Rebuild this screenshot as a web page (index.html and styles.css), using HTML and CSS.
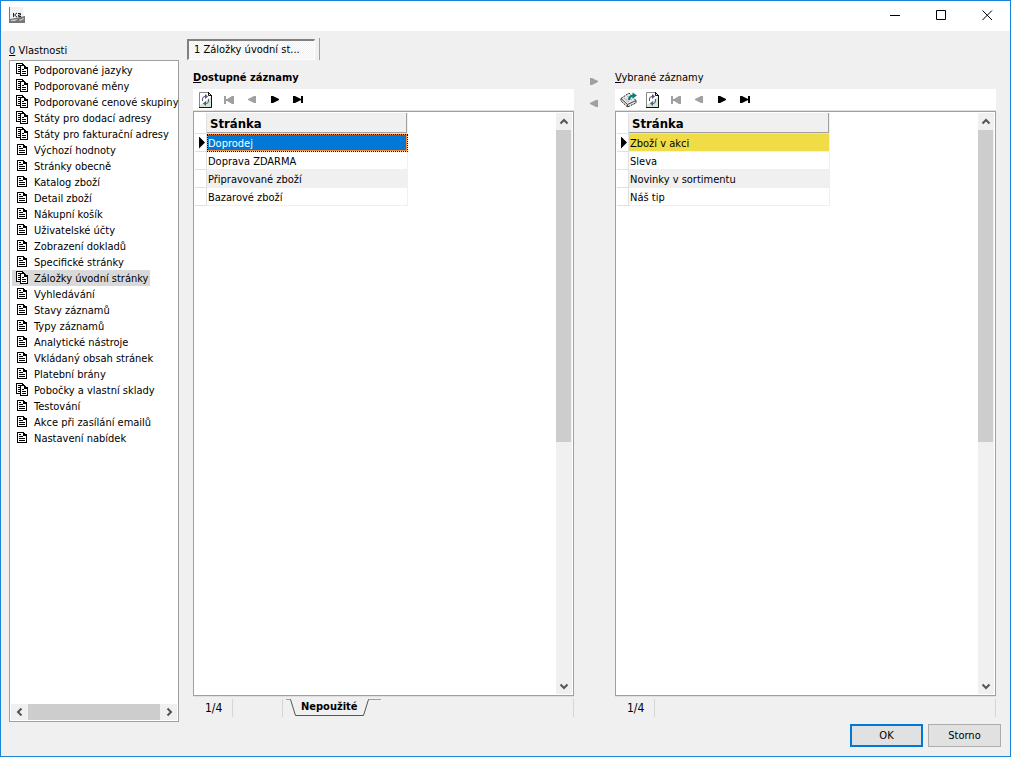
FILE: index.html
```html
<!DOCTYPE html>
<html lang="cs">
<head>
<meta charset="utf-8">
<title>Vlastnosti</title>
<link rel="stylesheet" href="styles.css">
</head>
<body>
<svg class="sprite" aria-hidden="true">
  <symbol id="page" viewBox="0 0 14 14">
    <g shape-rendering="crispEdges">
    <path d="M1.500 1.500H7.500V3.500H10.500V11.500H1.500Z" fill="#fff" stroke="#000"/>
    <path d="M7 2.500H9M7.500 2V4.500H10M3 3.500H5M3 5.500H7M3 7.500H9M3 9.500H9" fill="none" stroke="#000"/>
    </g>
  </symbol>
  <symbol id="pages" viewBox="0 0 14 14">
    <g shape-rendering="crispEdges">
    <path d="M.5 .5H6.500V2.500H8.500V10.500H.5Z" fill="#fff" stroke="#000"/>
    <path d="M2 2.500H4M2 4.500H4M2 6.500H4M2 8.500H4M6 1.500H8" stroke="#000"/>
    <path d="M4.500 2.500H8.500V4.500H11.500V12.500H4.500Z" fill="#fff" stroke="#000"/>
    <path d="M8 3.500H10M8.500 3V5.500H11M10 4.500H11M6 6.500H8M6 8.500H10M6 10.500H10" fill="none" stroke="#000"/>
    </g>
  </symbol>
  <symbol id="refresh" viewBox="0 0 16 16">
    <path d="M1.500 .5H10.500L13.500 3.500V15.500H1.500Z" fill="#fff" stroke="#888"/>
    <path d="M13 5V15H2V13Z" fill="#d4e6d4"/>
    <path d="M13.500 3V15.500H1M10.500 0V3.500H14M11 1L13.500 3.500" fill="none" stroke="#111"/>
    <path d="M4.500 9V7Q4.500 4.500 7 4.500H8M10.500 7V9Q10.500 11.500 8 11.500H7" fill="none" stroke="#55557f"/>
    <path d="M7 2L10 4.500L7 7ZM8 9L5 11.500L8 14Z" fill="#55557f"/>
  </symbol>
  <symbol id="book" viewBox="0 0 18 16">
    <path d="M1 6.500L9 1L16 8.500V11L7.500 15L1 9Z" fill="#e6e6e6"/>
    <path d="M1 6.500L9 1L16 8.500M1 6.500V9L7.500 15L16 11V9" fill="none" stroke="#222" stroke-dasharray="2 1"/>
    <path d="M1 6.500L7.500 12.500L16 8.500M7.500 12.500V15" fill="none" stroke="#444"/>
    <path d="M4 6L9 10M7 4L12 8" fill="none" stroke="#aaa"/>
    <path d="M9 8Q9 3.500 14 3.500" fill="none" stroke="#007c7c" stroke-width="2"/>
    <path d="M12.500 .5L17 3.500L12.500 6.500Z" fill="#007c7c"/>
  </symbol>
  <symbol id="first" viewBox="0 0 12 10"><path d="M1 1H3V9H1ZM11 1V9H9L4 6H3V4H4L9 1Z" fill="currentColor"/></symbol>
  <symbol id="prev" viewBox="0 0 12 10"><path d="M10 1V8H8L2 5V4L8 1Z" fill="currentColor"/></symbol>
  <symbol id="next" viewBox="0 0 12 10"><path d="M2 1V8H4L10 5V4L4 1Z" fill="currentColor"/></symbol>
  <symbol id="last" viewBox="0 0 12 10"><path d="M1 1V8H3L9 5V4L3 1ZM9 1H11V8H9Z" fill="currentColor"/></symbol>
  <symbol id="chev" viewBox="0 0 10 10"><path d="M1.500 6.500L5 3L8.500 6.500" fill="none" stroke="#555" stroke-width="2"/></symbol>
</svg>
<div class="window">
  <header class="titlebar">
    <svg class="logo" viewBox="0 0 16 16" role="img" aria-label="K2">
      <path d="M1 0H14L15 11L1 12Z" fill="#f2f2f2"/>
      <path d="M0 0H1V12L16 9V16H0Z" fill="#777"/>
      <path d="M2 13L9 12L6 14H2ZM10 13L15 11V12L11 14Z" fill="#ccc"/>
      <path d="M4.500 6V10M8 6L5.500 8L8 10M9 6.500H11.500V8H9.500V9.500H12" fill="none" stroke="#222"/>
    </svg>
    <div class="caption-buttons">
      <button aria-label="Minimalizovat"><svg viewBox="0 0 11 11"><path d="M0 5.500H10"/></svg></button>
      <button aria-label="Maximalizovat"><svg viewBox="0 0 11 11"><path d="M.5 .5H9.500V9.500H.5Z"/></svg></button>
      <button aria-label="Zavřít"><svg viewBox="0 0 11 11"><path d="M.5 .5L10 10M10 .5L.5 10"/></svg></button>
    </div>
  </header>
  <div class="content">
    <nav class="side" aria-labelledby="side-label">
      <div class="side-label" id="side-label"><u>0</u> Vlastnosti</div>
      <div class="tree">
        <ul class="items">
          <li><button><svg><use href="#pages"/></svg>Podporované jazyky</button></li>
          <li><button><svg><use href="#pages"/></svg>Podporované měny</button></li>
          <li><button><svg><use href="#pages"/></svg>Podporované cenové skupiny</button></li>
          <li><button><svg><use href="#pages"/></svg>Státy pro dodací adresy</button></li>
          <li><button><svg><use href="#pages"/></svg>Státy pro fakturační adresy</button></li>
          <li><button><svg><use href="#page"/></svg>Výchozí hodnoty</button></li>
          <li><button><svg><use href="#page"/></svg>Stránky obecně</button></li>
          <li><button><svg><use href="#page"/></svg>Katalog zboží</button></li>
          <li><button><svg><use href="#page"/></svg>Detail zboží</button></li>
          <li><button><svg><use href="#page"/></svg>Nákupní košík</button></li>
          <li><button><svg><use href="#page"/></svg>Uživatelské účty</button></li>
          <li><button><svg><use href="#page"/></svg>Zobrazení dokladů</button></li>
          <li><button><svg><use href="#page"/></svg>Specifické stránky</button></li>
          <li><button class="selected"><svg><use href="#pages"/></svg>Záložky úvodní stránky</button></li>
          <li><button><svg><use href="#page"/></svg>Vyhledávání</button></li>
          <li><button><svg><use href="#page"/></svg>Stavy záznamů</button></li>
          <li><button><svg><use href="#page"/></svg>Typy záznamů</button></li>
          <li><button><svg><use href="#page"/></svg>Analytické nástroje</button></li>
          <li><button><svg><use href="#page"/></svg>Vkládaný obsah stránek</button></li>
          <li><button><svg><use href="#page"/></svg>Platební brány</button></li>
          <li><button><svg><use href="#pages"/></svg>Pobočky a vlastní sklady</button></li>
          <li><button><svg><use href="#page"/></svg>Testování</button></li>
          <li><button><svg><use href="#page"/></svg>Akce při zasílání emailů</button></li>
          <li><button><svg><use href="#page"/></svg>Nastavení nabídek</button></li>
        </ul>
        <div class="hscroll">
          <button aria-label="Doleva"><svg class="left"><use href="#chev"/></svg></button>
          <div class="thumb"></div>
          <button aria-label="Doprava"><svg class="right"><use href="#chev"/></svg></button>
        </div>
      </div>
    </nav>
    <main class="main">
      <div class="tabs"><button class="tab">1 Záložky úvodní st...</button></div>
      <div class="panels">
        <section class="panel">
          <h2 class="heading active"><u>D</u>ostupné záznamy</h2>
          <div class="toolbar">
            <button aria-label="Obnovit"><svg class="tool"><use href="#refresh"/></svg></button>
            <button aria-label="První" disabled><svg class="nav"><use href="#first"/></svg></button>
            <button aria-label="Předchozí" disabled><svg class="nav"><use href="#prev"/></svg></button>
            <button aria-label="Další"><svg class="nav"><use href="#next"/></svg></button>
            <button aria-label="Poslední"><svg class="nav"><use href="#last"/></svg></button>
          </div>
          <div class="grid">
            <div class="sheet">
              <table>
                <thead><tr><td class="mark"></td><th>Stránka</th></tr></thead>
                <tbody>
                  <tr class="focused"><td class="mark current"></td><td>Doprodej</td></tr>
                  <tr><td class="mark"></td><td>Doprava ZDARMA</td></tr>
                  <tr class="odd"><td class="mark"></td><td>Připravované zboží</td></tr>
                  <tr><td class="mark"></td><td>Bazarové zboží</td></tr>
                </tbody>
              </table>
            </div>
            <div class="vscroll">
              <button aria-label="Nahoru"><svg><use href="#chev"/></svg></button>
              <div class="track"><div class="thumb"></div></div>
              <button aria-label="Dolů"><svg class="down"><use href="#chev"/></svg></button>
            </div>
          </div>
          <div class="status">
            <span class="count">1/4</span>
            <span class="spacer"></span>
            <button class="sheet-tab">
              <svg viewBox="0 0 95 18"><path d="M0 .5H5M82 .5H95" stroke="#a0a0a0"/><path d="M4.500 .5L9.500 16.500H77.500L82.500 .5" fill="none" stroke="#555"/></svg>
              <span>Nepoužité</span>
            </button>
          </div>
        </section>
        <div class="transfer">
          <button aria-label="Přidat" disabled><svg class="nav"><use href="#next"/></svg></button>
          <button aria-label="Odebrat" disabled><svg class="nav"><use href="#prev"/></svg></button>
        </div>
        <section class="panel">
          <h2 class="heading"><u>V</u>ybrané záznamy</h2>
          <div class="toolbar">
            <button class="wide" aria-label="Kniha"><svg class="book"><use href="#book"/></svg></button>
            <button aria-label="Obnovit"><svg class="tool"><use href="#refresh"/></svg></button>
            <button aria-label="První" disabled><svg class="nav"><use href="#first"/></svg></button>
            <button aria-label="Předchozí" disabled><svg class="nav"><use href="#prev"/></svg></button>
            <button aria-label="Další"><svg class="nav"><use href="#next"/></svg></button>
            <button aria-label="Poslední"><svg class="nav"><use href="#last"/></svg></button>
          </div>
          <div class="grid">
            <div class="sheet">
              <table>
                <thead><tr><td class="mark"></td><th>Stránka</th></tr></thead>
                <tbody>
                  <tr class="marked"><td class="mark current"></td><td>Zboží v akci</td></tr>
                  <tr><td class="mark"></td><td>Sleva</td></tr>
                  <tr class="odd"><td class="mark"></td><td>Novinky v sortimentu</td></tr>
                  <tr><td class="mark"></td><td>Náš tip</td></tr>
                </tbody>
              </table>
            </div>
            <div class="vscroll">
              <button aria-label="Nahoru"><svg><use href="#chev"/></svg></button>
              <div class="track"><div class="thumb"></div></div>
              <button aria-label="Dolů"><svg class="down"><use href="#chev"/></svg></button>
            </div>
          </div>
          <div class="status"><span class="count">1/4</span></div>
        </section>
      </div>
    </main>
  </div>
  <footer class="footer">
    <button class="cmd default">OK</button>
    <button class="cmd">Storno</button>
  </footer>
</div>
</body>
</html>
```
FILE: styles.css
```css
* { box-sizing: border-box; }
body {
  margin: 0;
  font: 11px/16px Tahoma, "DejaVu Sans Condensed", "Noto Sans", sans-serif;
  color: #000;
}
button {
  font: inherit;
  color: inherit;
  background: none;
  border: 0;
  padding: 0;
  margin: 0;
}
svg { display: block; flex: none; }
.sprite { position: absolute; width: 0; height: 0; }

.window {
  display: flex;
  flex-direction: column;
  min-height: 100vh;
  border: 1px solid #1883d7;
  background: #f0f0f0;
}
.titlebar {
  display: flex;
  justify-content: space-between;
  align-items: flex-start;
  height: 30px;
  padding-left: 8px;
  background: #fff;
}
.logo { width: 16px; height: 16px; margin-top: 6px; }
.caption-buttons { display: flex; }
.caption-buttons button {
  display: flex;
  align-items: center;
  justify-content: center;
  width: 46px;
  height: 29px;
}
.caption-buttons svg { width: 11px; height: 11px; fill: none; stroke: #000; }

.content { flex: 1; display: flex; gap: 8px; padding: 0 14px 0 8px; }
.side { display: flex; flex-direction: column; width: 170px; padding-top: 11px; }
.side-label { height: 18px; line-height: 18px; }
.tree {
  flex: 1;
  display: flex;
  flex-direction: column;
  justify-content: space-between;
  border: 1px solid #a0a0a0;
  padding: 1px;
  background: #fff;
}
.items { list-style: none; margin: 0; padding: 0 0 0 1px; }
.items li { height: 16px; }
.items button {
  display: flex;
  align-items: flex-start;
  gap: 4px;
  height: 16px;
  padding: 0 2px 0 4px;
  line-height: 18px;
  white-space: nowrap;
}
.items svg { width: 14px; height: 14px; margin-top: 1px; }
.items .selected { background: #d9d9d9; }
.hscroll { display: flex; height: 16px; background: #f0f0f0; }
.hscroll button, .vscroll button {
  display: flex;
  align-items: center;
  justify-content: center;
}
.hscroll button { width: 17px; }
.hscroll svg, .vscroll svg { width: 10px; height: 10px; }
.hscroll .thumb { flex: 1; background: #cdcdcd; }
.left { transform: rotate(-90deg); }
.right { transform: rotate(90deg); }
.down { transform: rotate(180deg); }

.main { flex: 1; display: flex; flex-direction: column; padding-top: 7px; }
.tabs { display: flex; align-self: flex-start; height: 22px; padding: 1px 4px 0 0; border-right: 1px solid #a0a0a0; }
.tab {
  width: 128px;
  height: 21px;
  padding-left: 5px;
  text-align: left;
  border: 1px solid #fff;
  border-top: 2px solid #808080;
  border-left: 2px solid #808080;
  background: repeating-conic-gradient(#fff 0 25%, #f0f0f0 0 50%) 0 0 / 2px 2px;
}
.panels { flex: 1; display: flex; padding-left: 6px; }
.panel { flex: 1; display: flex; flex-direction: column; }
.heading { height: 29px; margin: 0; padding-top: 6px; font-size: 11px; line-height: 24px; font-weight: normal; }
.heading.active { font-weight: bold; }
.toolbar {
  display: flex;
  height: 22px;
  padding-left: 1px;
  background: #fff;
  border-bottom: 1px solid #e0e0e0;
}
.toolbar button, .transfer button {
  display: flex;
  align-items: center;
  justify-content: center;
  width: 23px;
}
.toolbar .wide { width: 25px; }
button:disabled { color: #a0a0a0; }
.tool { width: 16px; height: 16px; }
.book { width: 18px; height: 16px; }
.nav { width: 12px; height: 10px; }

.grid {
  flex: 1;
  display: flex;
  justify-content: space-between;
  border: 1px solid #a0a0a0;
  padding: 1px;
  background: #fff;
}
table { border-collapse: separate; border-spacing: 0; width: 213px; table-layout: fixed; }
td, th { padding: 0; text-align: left; white-space: nowrap; }
tbody td { height: 18px; padding: 2px 0 0 1px; line-height: 15px; border-right: 1px solid #f0f0f0; border-bottom: 1px solid #f0f0f0; }
th {
  height: 21px;
  padding: 2px 0 0 3px;
  font-size: 13px;
  line-height: 18px;
  background: #f0f0f0;
  border-right: 1px solid #f0f0f0;
  border-bottom: 1px solid #e0e0e0;
  box-shadow: inset -1px -1px 0 #a0a0a0;
}
.mark, tbody .mark { width: 12px; padding: 0; border-right: 1px solid #e0e0e0; border-bottom: 1px solid #e0e0e0; }
.current::before {
  content: "";
  display: block;
  width: 6px;
  height: 12px;
  margin-left: 4px;
  background: #000;
  clip-path: polygon(0 0, 100% 50%, 0 100%);
}
.odd td:last-child { background: #f0f0f0; }
.focused td:last-child {
  background: #0078d7;
  color: #fff;
  box-shadow: inset 0 0 0 1px #ff8728;
  outline: 1px dotted #000;
  outline-offset: -1px;
}
.marked td:last-child { background: #f0dc46; }

.vscroll { display: flex; flex-direction: column; width: 16px; background: #f0f0f0; }
.vscroll button { height: 17px; width: 15px; }
.track { flex: 1; }
.track .thumb { height: 57%; width: 15px; background: #cdcdcd; }

.status { display: flex; height: 26px; padding: 2px 0 6px; border-top: 1px solid #e0e0e0; }
.status::after { content: ""; flex: 1; height: 18px; border-right: 1px solid #d5d5d5; }
.count { width: 40px; padding-left: 12px; font-size: 12px; line-height: 18px; border-right: 1px solid #d5d5d5; height: 18px; }
.spacer { width: 50px; height: 18px; border-right: 1px solid #d5d5d5; margin-right: 3px; }
.sheet-tab { display: grid; width: 95px; height: 18px; font-weight: bold; text-align: left; }
.sheet-tab > * { grid-area: 1 / 1; }
.sheet-tab svg { width: 95px; height: 18px; }
.sheet-tab span { padding-left: 15px; }

.transfer { width: 41px; padding: 11px 2px 0 0; display: flex; flex-direction: column; align-items: center; }
.transfer button { height: 22px; }

.footer { display: flex; justify-content: flex-end; gap: 5px; padding: 2px 9px 9px; }
.cmd { width: 73px; height: 23px; background: #e1e1e1; border: 1px solid #adadad; }
.cmd.default { border: 2px solid #0078d7; }
```
